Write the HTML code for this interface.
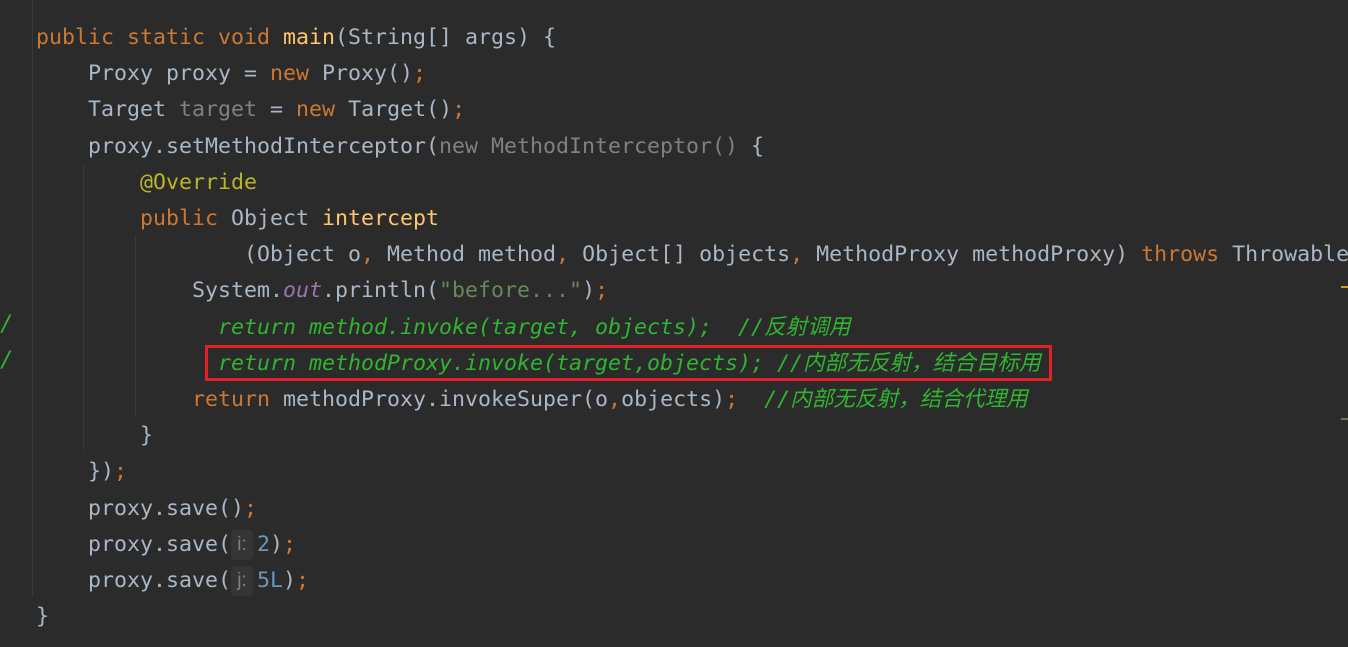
<!DOCTYPE html>
<html><head><meta charset="utf-8"><style>
body{margin:0;width:1348px;height:647px;background:#2b2b2b;overflow:hidden;position:relative}
.c{position:absolute;left:10px;top:20px;font-family:"DejaVu Sans Mono","Liberation Mono","Noto Sans CJK SC",monospace;font-size:21.6px;line-height:36.2px;color:#a9b7c6;white-space:pre;letter-spacing:0}
.k{color:#cc7832}.f{color:#ffc66d}.g{color:#808080}.a{color:#bbb529}.s{color:#6a8759}.o{color:#9876aa;font-style:italic}.n{color:#6897bb}
.cm{color:#2fb52f;font-style:italic}
.h{display:inline-block;width:22px;margin-right:4px;text-align:center;background:#353535;color:#808080;border-radius:4px;font-family:"Liberation Sans",sans-serif;font-size:19px;line-height:30px;vertical-align:middle}
.v{position:absolute;width:1px;background:#3a3a3a}
</style></head><body>
<div class="v" style="left:32px;top:0;height:597px"></div>
<div class="v" style="left:83px;top:165px;height:285px"></div>
<div class="v" style="left:135px;top:235px;height:180px"></div>
<div style="position:absolute;left:205px;top:345px;width:841px;height:30px;border:3px solid #e2202a"></div>
<div style="position:absolute;left:0;top:312px;color:#2fb52f;font:italic 22px 'DejaVu Sans Mono',monospace">/</div>
<div style="position:absolute;left:0;top:348px;color:#2fb52f;font:italic 22px 'DejaVu Sans Mono',monospace">/</div>
<div style="position:absolute;left:1341px;top:286px;width:7px;height:2px;background:#c9a020"></div>
<div style="position:absolute;left:1341px;top:418px;width:7px;height:2px;background:#707060"></div>
<div class="c">  <span class="k">public static void </span><span class="f">main</span>(String[] args) {
      Proxy proxy = <span class="k">new </span>Proxy()<span class="k">;</span>
      Target <span class="g">target</span> = <span class="k">new </span>Target()<span class="k">;</span>
      proxy.setMethodInterceptor(<span class="g">new MethodInterceptor()</span> {
          <span class="a">@Override</span>
          <span class="k">public </span>Object <span class="f">intercept</span>
                  (Object o<span class="k">, </span>Method method<span class="k">, </span>Object[] objects<span class="k">, </span>MethodProxy methodProxy) <span class="k">throws </span>Throwable {
              System.<span class="o">out</span>.println(<span class="s">"before..."</span>)<span class="k">;</span>
<span class="cm">                return method.invoke(target, objects);  //反射调用</span>
<span class="cm">                return methodProxy.invoke(target,objects); //内部无反射，结合目标用</span>
              <span class="k">return </span>methodProxy.invokeSuper(o<span class="k">,</span>objects)<span class="k">;  </span><span class="cm">//内部无反射，结合代理用</span>
          }
      })<span class="k">;</span>
      proxy.save()<span class="k">;</span>
      proxy.save(<span class="h">i:</span><span class="n">2</span>)<span class="k">;</span>
      proxy.save(<span class="h">j:</span><span class="n">5L</span>)<span class="k">;</span>
  }
</div>
</body></html>
